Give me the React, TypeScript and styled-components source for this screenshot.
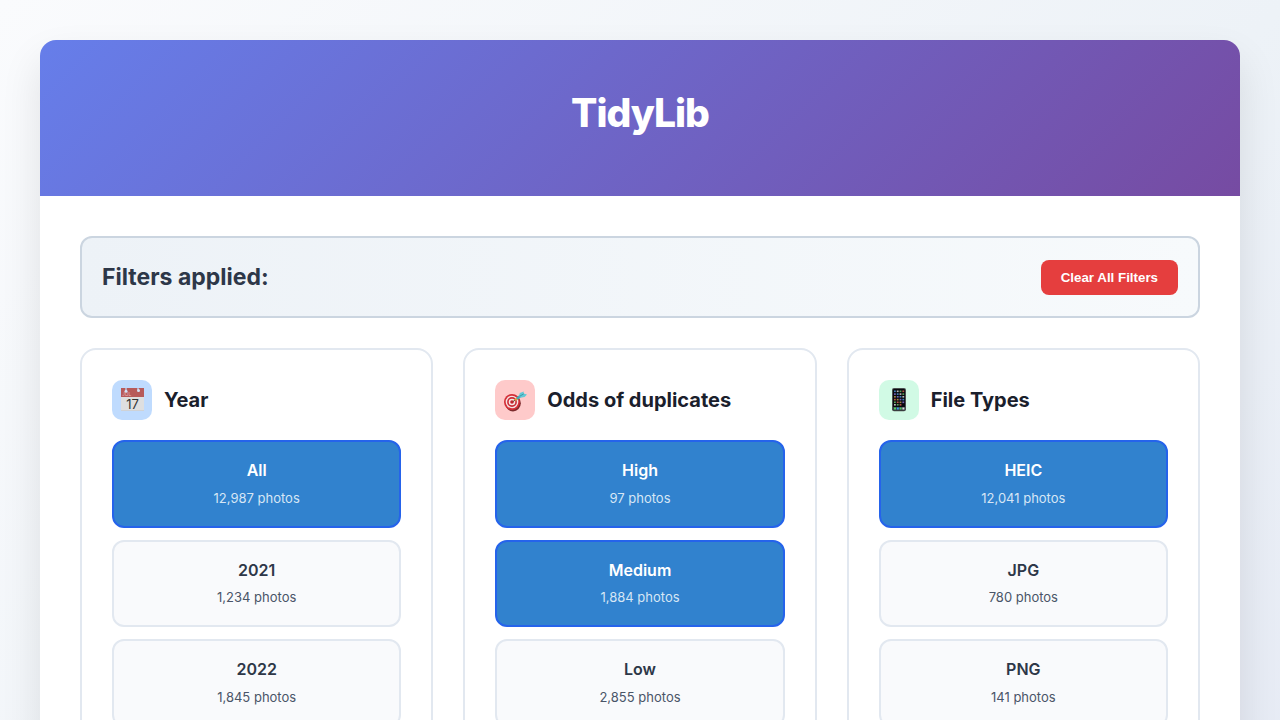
import React, { useState } from "react";
import styled, { createGlobalStyle } from "styled-components";

const GlobalStyle = createGlobalStyle`
  * { box-sizing: border-box; margin: 0; padding: 0; }
  body {
    display: flex;
    flex-direction: column;
    font-family: Inter, "Liberation Sans", sans-serif;
    line-height: 1.6;
    color: #1a202c;
    background: linear-gradient(135deg, #fafbfd 0%, #edf2f7 50%, #e2e6f3 100%);
    min-height: 180vh;
    padding: 40px;
  }
  #root {
    flex: 1;
    display: flex;
    justify-content: center;
  }
  ::-webkit-scrollbar { display: none; }
`;

const Page = styled.main`
  flex: 1;
  max-width: 1400px;
  background: #ffffff;
  border-radius: 16px;
  overflow: hidden;
  box-shadow: 0 20px 40px rgba(0, 0, 0, 0.1);
`;

const Header = styled.header`
  padding: 40px 40px 50px;
  text-align: center;
  color: #ffffff;
  background: linear-gradient(135deg, #667eea 0%, #764ba2 100%);
`;

const Title = styled.h1`
  font-size: 39px;
  line-height: 66px;
  font-weight: 800;
  letter-spacing: -1px;
`;

const Content = styled.div`
  padding: 40px;
  display: flex;
  flex-direction: column;
  gap: 30px;
`;

const FilterBar = styled.section`
  display: flex;
  align-items: center;
  justify-content: space-between;
  padding: 20px;
  border: 2px solid #cbd5e0;
  border-radius: 12px;
  background: linear-gradient(90deg, #edf2f7 0%, #f7fafc 100%);
`;

const FilterTitle = styled.h2`
  font-size: 23px;
  line-height: 38px;
  font-weight: 700;
  color: #2d3748;
`;

const ClearButton = styled.button`
  padding: 10px 20px;
  border: none;
  border-radius: 8px;
  background: #e53e3e;
  color: #ffffff;
  font-family: "Liberation Sans", Arial, sans-serif;
  font-weight: 600;
  cursor: pointer;
`;

const Grid = styled.div`
  display: grid;
  grid-template-columns: repeat(auto-fit, minmax(300px, 1fr));
  gap: 30px;
`;

const Card = styled.section`
  padding: 30px;
  border: 2px solid #e2e8f0;
  border-radius: 16px;
  background: #ffffff;
`;

const CardHeader = styled.div`
  display: flex;
  align-items: center;
  gap: 12px;
  margin-bottom: 20px;
`;

const IconTile = styled.span<{ $tint: string }>`
  display: flex;
  align-items: center;
  justify-content: center;
  width: 40px;
  height: 40px;
  border-radius: 10px;
  background: ${(p) => p.$tint};
`;

const CardTitle = styled.h3`
  font-size: 20px;
  font-weight: 700;
  color: #1a202c;
`;

const Options = styled.div`
  display: flex;
  flex-direction: column;
  gap: 12px;
`;

const Option = styled.button<{ $active: boolean }>`
  display: flex;
  flex-direction: column;
  align-items: center;
  gap: 4px;
  padding: 16px 16px 18px;
  border: 2px solid ${(p) => (p.$active ? "#2563eb" : "#e2e8f0")};
  border-radius: 12px;
  background: ${(p) => (p.$active ? "#3182ce" : "#f9fafc")};
  color: ${(p) => (p.$active ? "#ffffff" : "#2d3748")};
  font-family: inherit;
  line-height: 1.6;
  cursor: pointer;
`;

const OptionName = styled.span`
  font-size: 16px;
  font-weight: 600;
`;

const OptionCount = styled.span<{ $active: boolean }>`
  font-size: 13px;
  line-height: 20px;
  color: ${(p) => (p.$active ? "#d6e6f5" : "#4a5568")};
`;

const CalendarIcon = () => (
  <svg width="24" height="24" viewBox="0 0 24 24" aria-hidden="true">
    <rect x="1" y="0" width="23" height="23" fill="#dedfe0" />
    <rect x="1" y="0" width="23" height="9" fill="#b75a5a" />
    <rect x="1" y="22" width="23" height="1" fill="#cfd2d6" />
    <path d="M6 0v3M18 0v2" stroke="#bfdbfe" strokeWidth="1.2" />
    <circle cx="6" cy="3.2" r="1.5" fill="#d3e3f7" />
    <circle cx="18.5" cy="2.6" r="1.5" fill="#d3e3f7" />
    <text x="2" y="8.4" fontSize="5" fill="#e3b4b6" fontFamily="Inter, sans-serif">JUL</text>
    <text x="12.5" y="20.6" textAnchor="middle" fontSize="13" fill="#333333" fontFamily="Inter, sans-serif">17</text>
  </svg>
);

const TargetIcon = () => (
  <svg width="24" height="24" viewBox="0 0 24 24" aria-hidden="true">
    <ellipse cx="10" cy="15.2" rx="7.8" ry="8.2" fill="#7d2a2c" />
    <circle cx="9" cy="14" r="8" fill="#d42f38" />
    <circle cx="9" cy="14" r="6.3" fill="#f5e4e4" />
    <circle cx="9" cy="14" r="4.9" fill="#cc2c36" />
    <circle cx="9" cy="14" r="3.3" fill="#f5e4e4" />
    <circle cx="9" cy="14" r="1.8" fill="#c4242e" />
    <path d="M9.6 13.8l3.4-2.2" stroke="#6b4b3a" strokeWidth="1" />
    <path d="M11.8 12.3l3.4-2.4" stroke="#d8a23c" strokeWidth="2" />
    <path d="M14 10.8l4-3.2" stroke="#3fa9b8" strokeWidth="2.6" />
    <path d="M16 8.6l.8-3.6 4-1.6-.2 2.2 3.4.8-2.4 2.6-4.4.8z" fill="#62c9d6" />
    <path d="M16.5 8.4l4.3-2.6" stroke="#2f8c9e" strokeWidth=".8" />
  </svg>
);

const appColors = ["#4da3e8", "#e8e8e8", "#6fcf6b", "#e36a52", "#c8a94f", "#8e7be0"];

const PhoneIcon = () => (
  <svg width="14" height="24" viewBox="0 0 14 24" aria-hidden="true">
    <rect x="0" y="0" width="14" height="23.2" rx="2" fill="#4b4f50" />
    <rect x="1" y="1" width="12" height="21.2" rx="1" fill="#08090f" />
    {[2.5, 5.3, 8, 10.8, 13.5, 16].map((y, row) =>
      [2, 4.8, 7.6, 10.4].map((x, col) =>
        row === 5 && col === 3 ? null : (
          <rect key={`${x}-${y}`} x={x} y={y} width="1.8" height="1.6" fill={appColors[(row * 5 + col) % 6]} opacity=".8" />
        )
      )
    )}
    <rect x="1" y="19" width="12" height="3" fill="#334248" />
    <rect x="2" y="19.5" width="2" height="2" fill="#55d65b" />
    <rect x="4.8" y="19.5" width="2" height="2" fill="#3f9df0" />
    <rect x="7.6" y="19.5" width="2" height="2" fill="#50cf62" />
    <rect x="10.4" y="19.5" width="2" height="2" fill="#dddddd" />
  </svg>
);

type Group = {
  title: string;
  tint: string;
  icon: React.ReactNode;
  selected: string[];
  options: [string, string][];
};

const groups: Group[] = [
  {
    title: "Year",
    tint: "#bfdbfe",
    icon: <CalendarIcon />,
    selected: ["All"],
    options: [["All", "12,987"], ["2021", "1,234"], ["2022", "1,845"]],
  },
  {
    title: "Odds of duplicates",
    tint: "#fecaca",
    icon: <TargetIcon />,
    selected: ["High", "Medium"],
    options: [["High", "97"], ["Medium", "1,884"], ["Low", "2,855"]],
  },
  {
    title: "File Types",
    tint: "#d1fae5",
    icon: <PhoneIcon />,
    selected: ["HEIC"],
    options: [["HEIC", "12,041"], ["JPG", "780"], ["PNG", "141"]],
  },
];

const FilterCard = ({ group, selected, onToggle }: { group: Group; selected: string[]; onToggle: (name: string) => void }) => (
  <Card aria-label={group.title}>
    <CardHeader>
      <IconTile $tint={group.tint}>{group.icon}</IconTile>
      <CardTitle>{group.title}</CardTitle>
    </CardHeader>
    <Options>
      {group.options.map(([name, count]) => {
        const active = selected.includes(name);
        return (
          <Option key={name} type="button" $active={active} aria-pressed={active} onClick={() => onToggle(name)}>
            <OptionName>{name}</OptionName>
            <OptionCount $active={active}>{count} photos</OptionCount>
          </Option>
        );
      })}
    </Options>
  </Card>
);

export default function App() {
  const [selection, setSelection] = useState(groups.map((g) => g.selected));

  const toggle = (index: number, name: string) =>
    setSelection((current) =>
      current.map((names, i) =>
        i !== index ? names : names.includes(name) ? names.filter((n) => n !== name) : [...names, name]
      )
    );

  return (
    <>
      <GlobalStyle />
      <Page>
        <Header>
          <Title>TidyLib</Title>
        </Header>
        <Content>
          <FilterBar>
            <FilterTitle>Filters applied:</FilterTitle>
            <ClearButton type="button" onClick={() => setSelection(groups.map(() => []))}>
              Clear All Filters
            </ClearButton>
          </FilterBar>
          <Grid>
            {groups.map((group, i) => (
              <FilterCard key={group.title} group={group} selected={selection[i]} onToggle={(name) => toggle(i, name)} />
            ))}
          </Grid>
        </Content>
      </Page>
    </>
  );
}
